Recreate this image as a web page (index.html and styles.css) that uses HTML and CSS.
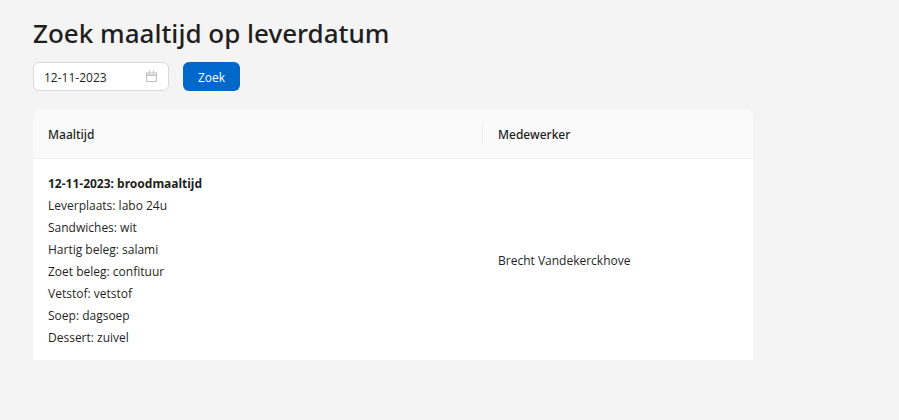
FILE: index.html
```html
<!DOCTYPE html>
<html lang="nl">
<head>
<meta charset="utf-8">
<meta name="viewport" content="width=device-width, initial-scale=1">
<title>Zoek maaltijd op leverdatum</title>
<link rel="stylesheet" href="styles.css">
</head>
<body>
<main class="page">
  <h1 class="title">Zoek maaltijd op leverdatum</h1>
  <form class="search">
    <label class="picker">
      <input class="picker-input" type="text" value="12-11-2023" aria-label="Leverdatum">
      <svg class="picker-icon" viewBox="0 0 13 13" aria-hidden="true">
        <path d="M1 2h11v3H1z" fill="currentColor" opacity=".5"/>
        <path d="M1.5 2.5v9h10v-9M1.5 5.5h10M4.5 0.5v3M8.5 0.5v3" fill="none" stroke="currentColor"/>
      </svg>
    </label>
    <button class="button" type="button">Zoek</button>
  </form>
  <table class="meals">
    <thead>
      <tr><th class="col-meal" scope="col">Maaltijd</th><th scope="col">Medewerker</th></tr>
    </thead>
    <tbody>
      <tr>
        <td>
          <strong class="meal-name">12-11-2023: broodmaaltijd</strong>
          <ul class="details">
            <li>Leverplaats: labo 24u</li>
            <li>Sandwiches: wit</li>
            <li>Hartig beleg: salami</li>
            <li>Zoet beleg: confituur</li>
            <li>Vetstof: vetstof</li>
            <li>Soep: dagsoep</li>
            <li>Dessert: zuivel</li>
          </ul>
        </td>
        <td>Brecht Vandekerckhove</td>
      </tr>
    </tbody>
  </table>
</main>
</body>
</html>
```

FILE: styles.css
```css
* { box-sizing: border-box; }
body {
  margin: 0;
  background: #f4f4f4;
  color: #1f1f1f;
  font: 12px/22px "Segoe UI", "Open Sans", sans-serif;
}
.page {
  max-width: 786px;
  padding: 15px 33px;
}
.title {
  margin: 0 0 11px;
  font-family: "Segoe UI", "Noto Sans", sans-serif;
  font-size: 26px;
  font-weight: 500;
  line-height: 36px;
}
.search {
  display: flex;
  gap: 14px;
  margin-bottom: 18px;
}
.picker {
  display: flex;
  align-items: center;
  width: 136px;
  height: 29px;
  padding: 0 10px;
  border: 1px solid #d9d9d9;
  border-radius: 6px;
  background: #fff;
}
.picker-input {
  flex: 1;
  min-width: 0;
  padding: 2px 0 0;
  border: 0;
  outline: 0;
  background: none;
  color: inherit;
  font: inherit;
}
.picker-icon {
  width: 13px;
  height: 13px;
  color: #bfbfbf;
}
.button {
  height: 29px;
  padding: 2px 15px 0;
  border: 0;
  border-radius: 6px;
  background: #0068c9;
  color: #fff;
  font: inherit;
}
.meals {
  width: 100%;
  table-layout: fixed;
  border-collapse: separate;
  border-spacing: 0;
}
.meals th {
  position: relative;
  padding: 15px 15px 12px;
  background: #fafafa;
  border-bottom: 1px solid #f0f0f0;
  font-family: "Segoe UI", "Noto Sans", sans-serif;
  font-weight: 500;
  text-align: left;
}
.meals th:first-child { border-top-left-radius: 8px; }
.meals th:last-child { border-top-right-radius: 8px; }
.col-meal { width: 450px; }
.col-meal::after {
  content: "";
  position: absolute;
  top: 14px;
  right: 0;
  width: 1px;
  height: 21px;
  background: #f0f0f0;
}
.meals td {
  padding: 14px 15px 11px;
  background: #fff;
  border-bottom: 1px solid #f0f0f0;
  vertical-align: middle;
}
.meal-name {
  display: block;
  font-family: "Segoe UI", "Noto Sans", sans-serif;
}
.details {
  margin: 0;
  padding: 0;
  list-style: none;
}
```
